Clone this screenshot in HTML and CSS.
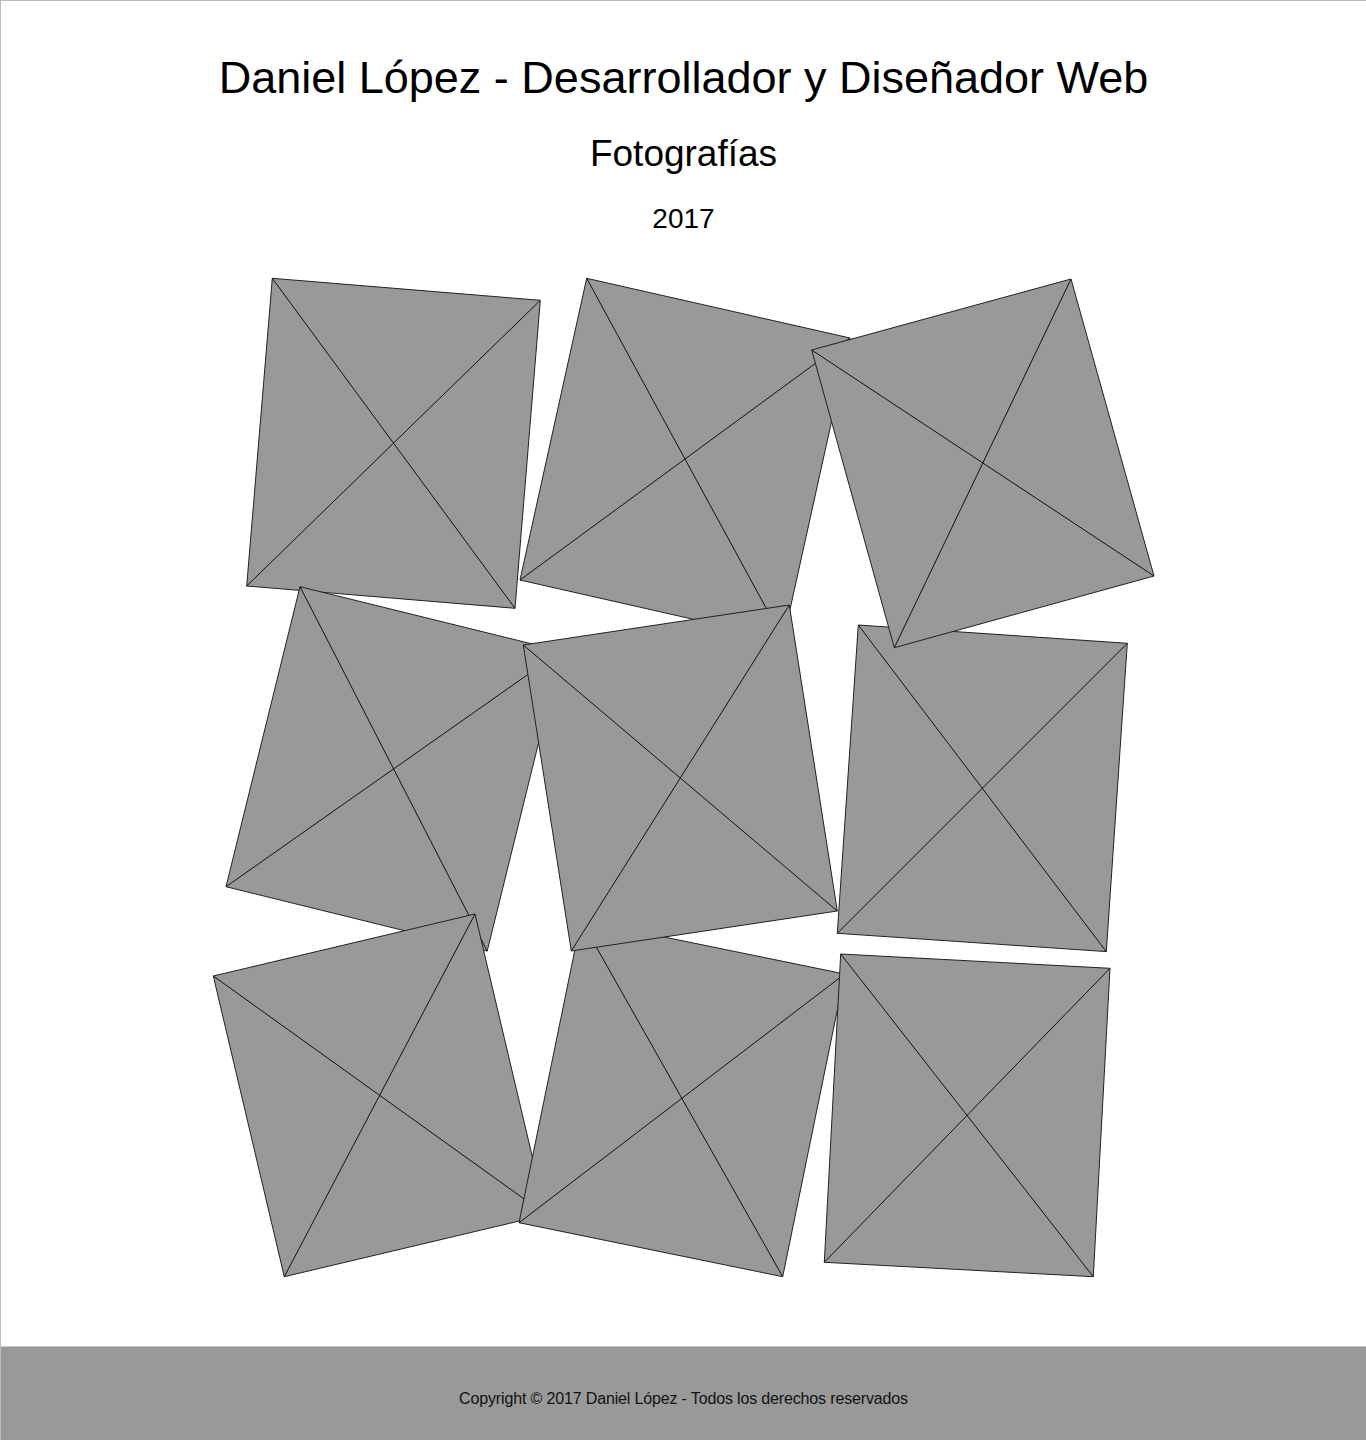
FILE: index.html
```html
<!DOCTYPE html>
<html lang="es">
<head>
<meta charset="utf-8">
<title>Daniel López - Fotografías</title>
<link rel="stylesheet" href="styles.css">
</head>
<body>
<div class="page">
  <header class="header">
    <h1 class="title">Daniel López - Desarrollador y Diseñador Web</h1>
    <h2 class="subtitle">Fotografías</h2>
    <p class="year">2017</p>
  </header>

  <main class="gallery">
    <svg class="board" width="1365" height="1060" viewBox="1 250 1365 1060" xmlns="http://www.w3.org/2000/svg">
      <g class="photo">
        <polygon class="frame" points="272.3,278.3 540.3,300.3 515,608.3 246.7,586"/>
        <line class="cross" x1="272.3" y1="278.3" x2="515" y2="608.3"/>
        <line class="cross" x1="540.3" y1="300.3" x2="246.7" y2="586"/>
      </g>
      <g class="photo">
        <polygon class="frame" points="586.7,278.3 850,338 783.3,639.7 520,580"/>
        <line class="cross" x1="586.7" y1="278.3" x2="783.3" y2="639.7"/>
        <line class="cross" x1="850" y1="338" x2="520" y2="580"/>
      </g>
      <g class="photo">
        <polygon class="frame" points="858.3,625 1127.3,643.3 1106.3,951.6 837.3,933.3"/>
        <line class="cross" x1="858.3" y1="625" x2="1106.3" y2="951.6"/>
        <line class="cross" x1="1127.3" y1="643.3" x2="837.3" y2="933.3"/>
      </g>
      <g class="photo">
        <polygon class="frame" points="811.7,350 1071,279 1154,576 894.3,647.7"/>
        <line class="cross" x1="811.7" y1="350" x2="1154" y2="576"/>
        <line class="cross" x1="1071" y1="279" x2="894.3" y2="647.7"/>
      </g>
      <g class="photo">
        <polygon class="frame" points="300,586.7 561.2,651.1 487.2,951.1 226,886.7"/>
        <line class="cross" x1="300" y1="586.7" x2="487.2" y2="951.1"/>
        <line class="cross" x1="561.2" y1="651.1" x2="226" y2="886.7"/>
      </g>
      <g class="photo">
        <polygon class="frame" points="213.3,976 475,914 546,1214.7 284.3,1276.7"/>
        <line class="cross" x1="213.3" y1="976" x2="546" y2="1214.7"/>
        <line class="cross" x1="475" y1="914" x2="284.3" y2="1276.7"/>
      </g>
      <g class="photo">
        <polygon class="frame" points="581,920 844.7,974 782.7,1276.7 519,1222.7"/>
        <line class="cross" x1="581" y1="920" x2="782.7" y2="1276.7"/>
        <line class="cross" x1="844.7" y1="974" x2="519" y2="1222.7"/>
      </g>
      <g class="photo">
        <polygon class="frame" points="523.3,645 789.3,605 837.3,911 571.3,951"/>
        <line class="cross" x1="523.3" y1="645" x2="837.3" y2="911"/>
        <line class="cross" x1="789.3" y1="605" x2="571.3" y2="951"/>
      </g>
      <g class="photo">
        <polygon class="frame" points="840.7,954 1110,968.3 1093.3,1276.7 824.3,1262.3"/>
        <line class="cross" x1="840.7" y1="954" x2="1093.3" y2="1276.7"/>
        <line class="cross" x1="1110" y1="968.3" x2="824.3" y2="1262.3"/>
      </g>
    </svg>
  </main>

  <footer class="footer">
    <p class="copy">Copyright © 2017 Daniel López - Todos los derechos reservados</p>
  </footer>
</div>
</body>
</html>
```

FILE: styles.css
```css
html, body {
  margin: 0;
  padding: 0;
  background: #ffffff;
}

body {
  font-family: "Liberation Sans", Arial, sans-serif;
  color: #000000;
}

.page {
  border-top: 1px solid #bdbdbd;
  border-left: 1px solid #bdbdbd;
  min-height: 1439px;
  display: flex;
  flex-direction: column;
  overflow: hidden;
}

.header {
  padding-top: 50px;
  text-align: center;
}

.title {
  margin: 0;
  font-size: 45px;
  line-height: 54px;
  font-weight: normal;
}

.subtitle {
  margin: 27px 0 0;
  font-size: 37px;
  line-height: 44px;
  font-weight: normal;
}

.year {
  margin: 26px 0 0;
  font-size: 28px;
  line-height: 34px;
}

.gallery {
  margin-top: 14px;
  display: flex;
}

.board {
  display: block;
}

.frame {
  fill: #999999;
  stroke: #222222;
  stroke-width: 1;
}

.cross {
  stroke: #111111;
  stroke-width: 1;
}

.footer {
  margin-top: 36px;
  flex: 1;
  border-top: 1px solid #c8c8c8;
  background: #999999;
  padding: 43px 0 40px;
  text-align: center;
}

.copy {
  margin: 0;
  font-size: 16px;
  line-height: 18px;
  letter-spacing: -0.15px;
  color: #111111;
}
```
